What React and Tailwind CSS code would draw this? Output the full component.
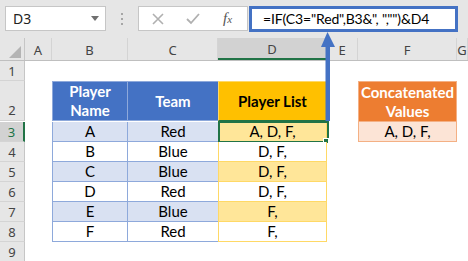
import React from 'react';

const cols = [
  { name: 'A', w: 'w-[27px]' },
  { name: 'B', w: 'w-[76px]' },
  { name: 'C', w: 'w-[90px]' },
  { name: 'D', w: 'w-[109px]' },
  { name: 'E', w: 'w-[31px]' },
  { name: 'F', w: 'w-[99px]' },
  { name: 'G', w: 'w-[11px]' },
];

const players = [
  { name: 'A', team: 'Red', list: 'A, D, F,' },
  { name: 'B', team: 'Blue', list: 'D, F,' },
  { name: 'C', team: 'Blue', list: 'D, F,' },
  { name: 'D', team: 'Red', list: 'D, F,' },
  { name: 'E', team: 'Blue', list: 'F,' },
  { name: 'F', team: 'Red', list: 'F,' },
];

const RowHead = ({ n, h, selected }) => (
  <div
    className={
      'w-[25px] shrink-0 flex items-center justify-center font-["Noto_Sans"] text-[13px] border-b border-[#d4d4d4] ' +
      h +
      (selected
        ? ' bg-[#d2d2d2] text-[#217346] border-r-2 border-r-[#217346]'
        : ' bg-[#e6e6e6] text-[#444] border-r border-r-[#c6c6c6]')
    }
  >
    <span className="leading-none pt-[1px]">{n}</span>
  </div>
);

const App = () => {
  return (
    <div className="relative w-[468px] h-[261px] overflow-hidden bg-white font-['Lato',sans-serif] text-black">
      {/* formula bar */}
      <div className="h-[38px] bg-[#e6e6e6] flex items-start pt-[6px]">
        <div className="ml-[5px] w-[101px] h-[25px] bg-white border border-[#c6c6c6] flex items-center justify-between pl-[7px] pr-[6px]">
          <span className="font-['Noto_Sans'] text-[14px] text-[#222] leading-none">D3</span>
          <svg width="8" height="5" viewBox="0 0 8 5">
            <polygon points="0,0 8,0 4,5" fill="#707070" />
          </svg>
        </div>
        <div className="w-[32px] h-[25px] flex flex-col items-center justify-center gap-[3px]">
          <span className="w-[2px] h-[2px] bg-[#a6a6a6]" />
          <span className="w-[2px] h-[2px] bg-[#a6a6a6]" />
          <span className="w-[2px] h-[2px] bg-[#a6a6a6]" />
        </div>
        <div className="w-[110px] h-[25px] bg-white border border-[#c6c6c6] flex items-center">
          <svg className="ml-[13px]" width="12" height="12" viewBox="0 0 12 12">
            <path d="M1 1 L11 11 M11 1 L1 11" stroke="#b0b0b0" strokeWidth="1.6" />
          </svg>
          <svg className="ml-[22px]" width="14" height="12" viewBox="0 0 14 12">
            <path d="M1 6 L5 10 L13 1" stroke="#b0b0b0" strokeWidth="1.8" fill="none" />
          </svg>
          <span className="ml-[23px] font-['Liberation_Serif',serif] italic text-[15px] text-[#555] leading-none">
            f<span className="text-[11px]">x</span>
          </span>
        </div>
        <div className="ml-[1px] w-[209px] h-[26px] bg-white border-[3px] border-[#4472c4] flex items-center pl-[11px]">
          <span className="text-[14px] tracking-[-0.15px] leading-none text-black">=IF(C3="Red",B3&amp;", ","")&amp;D4</span>
        </div>
      </div>

      {/* column headers */}
      <div className="h-[23px] flex bg-[#e6e6e6] border-b border-[#bfbfbf]">
        <div className="w-[25px] shrink-0 border-r border-[#c6c6c6] flex items-end justify-end pr-[3px] pb-[2px]">
          <svg width="12" height="12" viewBox="0 0 12 12">
            <polygon points="0,12 12,12 12,0" fill="#b4b4b4" />
          </svg>
        </div>
        {cols.map((c) => (
          <div
            key={c.name}
            className={
              'shrink-0 flex items-center justify-center font-["Noto_Sans"] text-[13px] text-[#444] border-r border-[#d4d4d4] ' +
              c.w +
              (c.name === 'D' ? ' bg-[#d2d2d2] border-b-2 border-b-[#217346] text-[#222]' : '')
            }
          >
            <span className="leading-none pt-[2px]">{c.name}</span>
          </div>
        ))}
      </div>

      {/* row 1 */}
      <div className="flex">
        <RowHead n="1" h="h-[20px]" />
      </div>

      {/* row 2 : headers */}
      <div className="flex">
        <RowHead n="2" h="h-[40px] !items-end pb-[3px]" />
        <div className="w-[27px] shrink-0" />
        <div className="w-[76px] shrink-0 h-[40px] bg-[#4472c4] border border-[#8ea9db] flex items-center justify-center text-center text-white font-bold text-[15px] leading-[19px]">
          Player
          <br />
          Name
        </div>
        <div className="w-[90px] shrink-0 h-[40px] bg-[#4472c4] border-y border-[#8ea9db] flex items-center justify-center text-white font-bold text-[15px]">
          Team
        </div>
        <div className="w-[109px] shrink-0 h-[40px] bg-[#ffc000] border border-[#ffd966] border-b-[#217346] flex items-center justify-center font-bold text-[15px]">
          Player List
        </div>
        <div className="w-[31px] shrink-0" />
        <div className="w-[99px] shrink-0 h-[41px] bg-[#ed7d31] border border-[#f4b084] flex items-center justify-center text-center text-white font-bold text-[15px] leading-[19px]">
          Concatenated
          <br />
          Values
        </div>
      </div>

      {/* rows 3-8 */}
      {players.map((p, i) => {
        const odd = i % 2 === 0;
        const first = i === 0;
        return (
          <div className="flex" key={p.name}>
            <RowHead n={String(i + 3)} h="h-[20px]" selected={first} />
            <div className="w-[27px] shrink-0" />
            <div
              className={
                'w-[76px] shrink-0 h-[20px] border-x border-b border-[#8ea9db] flex items-center justify-center text-[15px] ' +
                (odd ? 'bg-[#d9e1f2]' : 'bg-white')
              }
            >
              {p.name}
            </div>
            <div
              className={
                'w-[90px] shrink-0 h-[20px] border-b border-[#8ea9db] flex items-center justify-center text-[15px] ' +
                (odd ? 'bg-[#d9e1f2]' : 'bg-white')
              }
            >
              {p.team}
            </div>
            <div
              className={
                'relative w-[109px] shrink-0 h-[20px] border-x border-b border-[#ffd966] flex items-center justify-center text-[15px] ' +
                (odd ? 'bg-[#ffe699]' : 'bg-white')
              }
            >
              {p.list}
              {first && (
                <>
                  <div className="absolute -left-[1px] -top-[1px] w-[111px] h-[22px] border-2 border-[#217346]" />
                  <div className="absolute -right-[3px] -bottom-[3px] w-[6px] h-[6px] bg-[#217346] border border-white" />
                </>
              )}
            </div>
            {first && (
              <>
                <div className="w-[31px] shrink-0" />
                <div className="w-[99px] shrink-0 h-[20px] bg-[#fce4d6] border-x border-b border-[#f4b084] flex items-center justify-center text-[15px]">
                  A, D, F,
                </div>
              </>
            )}
          </div>
        );
      })}

      {/* row 9 */}
      <div className="flex">
        <RowHead n="9" h="h-[20px]" />
      </div>

      {/* arrow from formula to D column */}
      <svg className="absolute left-[318px] top-[30px]" width="20" height="92" viewBox="0 0 20 92">
        <polygon points="3,17 9.5,2 17,17" fill="#4472c4" />
        <rect x="7.5" y="15" width="4.5" height="76" fill="#4472c4" />
      </svg>
    </div>
  );
};

export default App;
